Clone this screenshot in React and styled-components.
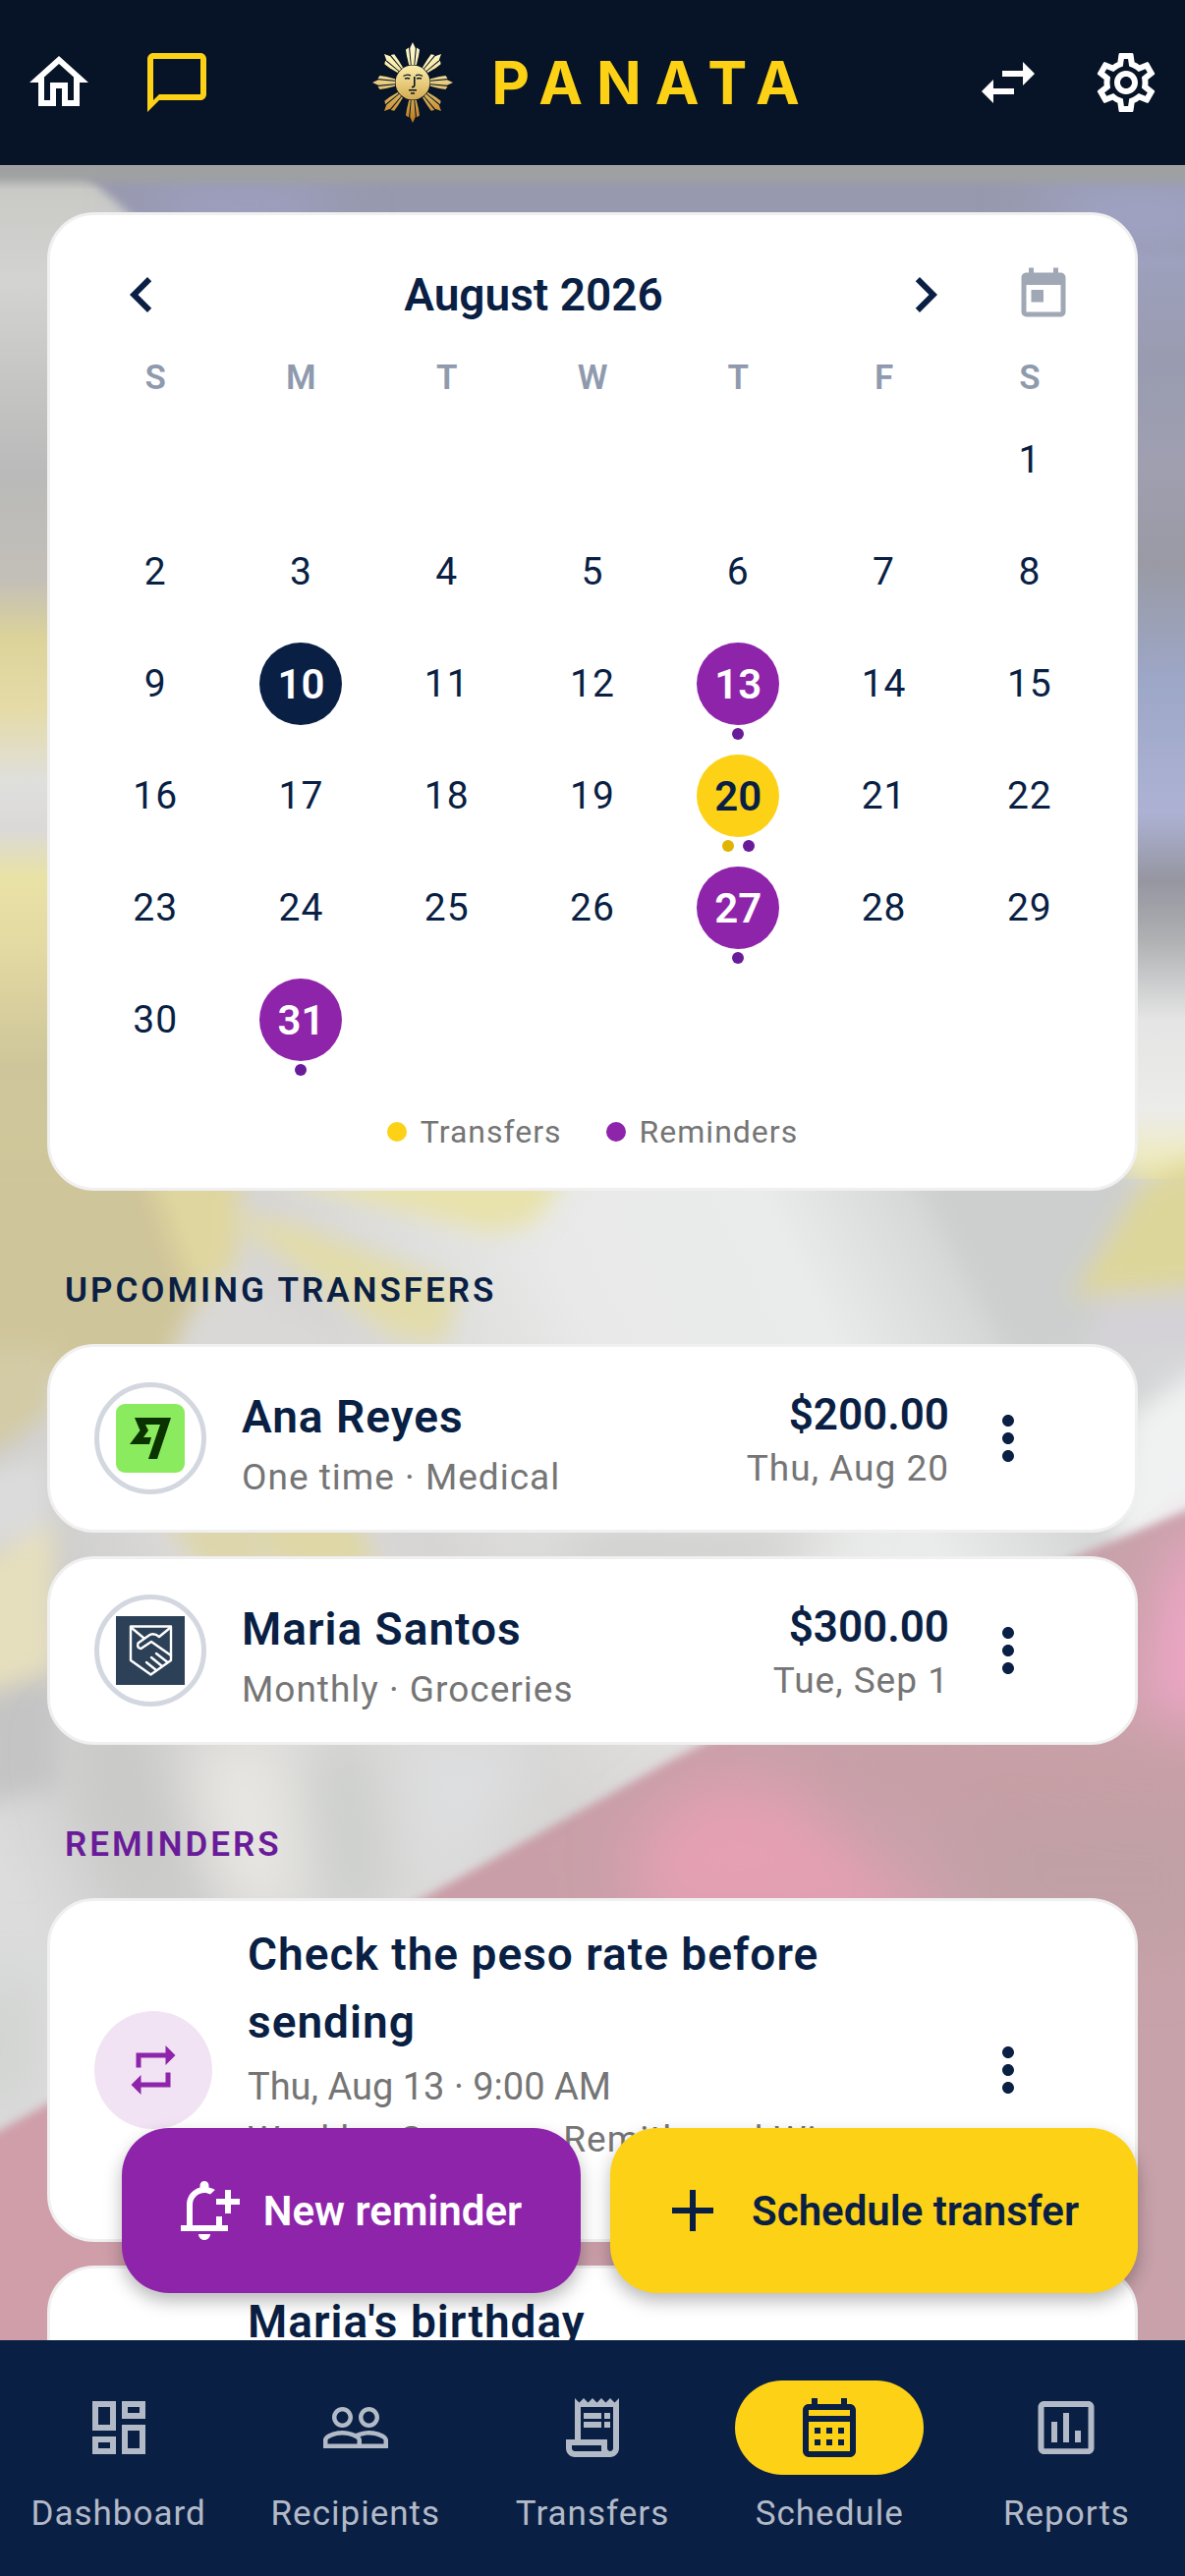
import React from "react";
import styled, { createGlobalStyle } from "styled-components";
import {
  MdAdd,
  MdChatBubbleOutline,
  MdChevronLeft,
  MdChevronRight,
  MdInsertChartOutlined,
  MdMoreVert,
  MdOutlineCalendarMonth,
  MdOutlineDashboard,
  MdOutlineHome,
  MdOutlineReceiptLong,
  MdOutlineSettings,
  MdPeopleOutline,
  MdRepeat,
  MdSwapHoriz,
  MdToday,
} from "react-icons/md";

const navy = "#0a1f44";
const yellow = "#fcd116";
const purple = "#8e24aa";
const deepPurple = "#6a1b9a";
const grey = "#757575";

const GlobalStyle = createGlobalStyle`
  * {
    box-sizing: border-box;
  }

  body {
    margin: 0;
    font-family: Roboto, "Liberation Sans", sans-serif;
    color: ${navy};
  }

  button {
    padding: 0;
    border: none;
    background: none;
    font: inherit;
    color: inherit;
    cursor: pointer;
  }

  svg {
    display: block;
    flex-shrink: 0;
  }
`;

const Page = styled.div`
  display: flex;
  flex-direction: column;
  height: 100vh;
`;

const Header = styled.header`
  display: flex;
  align-items: center;
  height: 168px;
  background-color: #071427;
  flex-shrink: 0;
`;

const IconButton = styled.button`
  display: flex;
  align-items: center;
  justify-content: center;
  width: 120px;
  height: 96px;
  font-size: ${(props) => props.$size || 72}px;
  color: ${(props) => props.$color || navy};
  flex-shrink: 0;
`;

const Brand = styled.h1`
  display: flex;
  flex: 1;
  align-items: center;
  justify-content: center;
  gap: 38px;
  margin: 0;
  font-family: Inter, "Open Sans", sans-serif;
  font-size: 60px;
  font-weight: 700;
  letter-spacing: 14px;
  color: ${yellow};
`;

const Stage = styled.div`
  position: relative;
  flex: 1;
  min-height: 0;
  overflow: hidden;
`;

const Backdrop = styled.svg`
  position: absolute;
  inset: 0;
  width: 100%;
  height: 100%;
`;

const Scroller = styled.main`
  position: relative;
  height: 100%;
  padding: 48px 48px 288px;
  overflow-y: auto;
  scrollbar-width: none;
`;

const Card = styled.section`
  background-color: #fff;
  border: 3px solid #f0f0f0;
  border-radius: 48px;
`;

const CalendarCard = styled(Card)`
  padding: 33px;
`;

const MonthBar = styled.div`
  display: flex;
  align-items: center;
`;

const MonthName = styled.h2`
  flex: 1;
  margin: 0;
  text-align: center;
  font-size: 46px;
  font-weight: 600;
`;

const Weekdays = styled.div`
  display: grid;
  grid-template-columns: repeat(7, 1fr);
  height: 72px;
  align-items: center;
  justify-items: center;
  font-size: 35px;
  font-weight: 600;
  color: #8f9aae;
`;

const Days = styled.div`
  display: grid;
  grid-template-columns: repeat(7, 1fr);
  grid-auto-rows: 114px;
  justify-items: center;
`;

const Day = styled.button`
  display: flex;
  flex-direction: column;
  align-items: center;
  gap: 3px;
  padding-top: 6px;
  grid-column-start: ${(props) => props.$column || "auto"};
`;

const DayNumber = styled.span`
  display: flex;
  align-items: center;
  justify-content: center;
  width: 84px;
  height: 84px;
  border-radius: 50%;
  font-size: ${(props) => (props.$fill ? 42 : 39)}px;
  font-weight: ${(props) => (props.$fill ? 600 : 400)};
  letter-spacing: ${(props) => (props.$fill ? 0 : 1)}px;
  background-color: ${(props) => props.$fill || "transparent"};
  color: ${(props) => props.$text || navy};
`;

const DayDots = styled.span`
  display: flex;
  gap: 9px;
`;

const Dot = styled.span`
  width: ${(props) => props.$size}px;
  height: ${(props) => props.$size}px;
  border-radius: 50%;
  background-color: ${(props) => props.$color};
`;

const Legend = styled.div`
  display: flex;
  justify-content: center;
  gap: 45px;
  height: 48px;
  margin-top: 24px;
`;

const LegendItem = styled.span`
  display: flex;
  align-items: center;
  gap: 14px;
  font-size: 32px;
  letter-spacing: 1px;
  color: ${grey};
`;

const SectionTitle = styled.h2`
  margin: 0;
  padding: 72px 18px 24px;
  font-size: 35px;
  line-height: 60px;
  font-weight: 600;
  letter-spacing: 3px;
  color: ${(props) => props.$color || navy};
`;

const List = styled.div`
  display: flex;
  flex-direction: column;
  gap: 24px;
`;

const ItemCard = styled(Card)`
  display: flex;
  align-items: center;
  min-height: 192px;
  padding: 20px 69px 20px 45px;
`;

const Avatar = styled.div`
  display: flex;
  align-items: center;
  justify-content: center;
  width: 114px;
  height: 114px;
  margin-right: 36px;
  border: 5px solid #d3d7df;
  border-radius: 50%;
  flex-shrink: 0;
`;

const ReminderBadge = styled.div`
  display: flex;
  align-items: center;
  justify-content: center;
  width: 120px;
  height: 120px;
  margin-right: 36px;
  border-radius: 50%;
  background-color: #f1e3f4;
  color: ${purple};
  font-size: 60px;
  flex-shrink: 0;
`;

const ItemText = styled.div`
  flex: 1;
  min-width: 0;
  padding-top: ${(props) => props.$top || 0}px;
`;

const ItemTitle = styled.h3`
  margin: 0;
  font-size: 46px;
  line-height: 69px;
  font-weight: 600;
  letter-spacing: 1px;
`;

const ItemDetail = styled.p`
  margin: 0;
  font-size: 37px;
  line-height: 54px;
  letter-spacing: 1px;
  color: ${grey};
`;

const ReminderTime = styled(ItemDetail)`
  padding-top: 4px;
  font-size: 38px;
  letter-spacing: 0;
`;

const AmountColumn = styled.div`
  padding-top: 2px;
  text-align: right;
`;

const Amount = styled.p`
  margin: 0;
  font-size: 44px;
  line-height: 60px;
  font-weight: 600;
`;

const AmountDate = styled.p`
  margin: 0;
  font-size: 37px;
  line-height: 50px;
  letter-spacing: 1px;
  color: ${grey};
`;

const Actions = styled.div`
  position: absolute;
  right: 48px;
  bottom: 48px;
  display: flex;
  gap: 30px;
`;

const ActionButton = styled.button`
  display: flex;
  align-items: center;
  gap: 24px;
  height: 168px;
  padding: 0 60px 0 48px;
  border-radius: 48px;
  background-color: ${(props) => props.$fill};
  color: ${(props) => props.$text};
  font-size: 42px;
  font-weight: 600;
  box-shadow: 0 8px 18px rgba(0, 0, 0, 0.28);

  svg {
    width: 72px;
    height: 72px;
  }
`;

const NavBar = styled.nav`
  display: flex;
  height: 240px;
  padding-top: 41px;
  background-color: ${navy};
  flex-shrink: 0;
`;

const NavLink = styled.a`
  display: flex;
  flex: 1;
  flex-direction: column;
  align-items: center;
  gap: 16px;
  font-size: 35px;
  line-height: 48px;
  letter-spacing: 1px;
  text-decoration: none;
  color: #b3bac7;
`;

const NavPill = styled.span`
  display: flex;
  align-items: center;
  justify-content: center;
  width: 192px;
  height: 96px;
  border-radius: 48px;
  font-size: 72px;
  background-color: ${(props) => (props.$active ? yellow : "transparent")};
  color: ${(props) => (props.$active ? navy : "inherit")};
`;

const rayAngles = [0, 45, 90, 135, 180, 225, 270, 315];

function SunLogo() {
  return (
    <svg width="84" height="84" viewBox="-42 -42 84 84" aria-hidden="true">
      <defs>
        <linearGradient id="gold" x1="0" y1="0" x2="0" y2="1">
          <stop offset="0" stopColor="#fffbd8" />
          <stop offset="0.3" stopColor="#faedaa" />
          <stop offset="0.6" stopColor="#e0bd68" />
          <stop offset="1" stopColor="#b97416" />
        </linearGradient>
        <mask id="sun">
          {rayAngles.map((angle) => (
            <g key={angle} transform={`rotate(${angle})`} fill="#fff">
              <path d="M-1.300-18L-2.800-35 0-41 2.800-35 1.300-18z" />
              <path d="M2.200-18L4-35.500 7-33.500 6-27 3.800-18z" />
              <path d="M-2.200-18L-4-35.500-7-33.500-6-27-3.800-18z" />
            </g>
          ))}
          <circle r="17.500" fill="#fff" />
          <g fill="none" stroke="#000" strokeWidth="1.400">
            <path d="M-9.500-6.500q4-2.500 7.500-.5M3-7q3.500-2 7 .5" />
            <path d="M-8-3.800q2.500-1.500 5 0M4-3.800q2.500-1.500 5 0" />
            <path d="M1.800-6v9q-.5 2-2.800 1.500" strokeWidth="1.600" />
            <path d="M-4 7.800h8M-2 11h4" />
          </g>
        </mask>
      </defs>
      <rect x="-42" y="-42" width="84" height="84" fill="url(#gold)" mask="url(#sun)" />
    </svg>
  );
}

function WiseLogo() {
  return (
    <svg width="70" height="70" viewBox="0 0 70 70" aria-label="Wise">
      <rect width="70" height="70" rx="9" fill="#8aeb5e" />
      <path
        fill="#0b3300"
        d="M19 14h37L42 56h-9l12-35H30l3 6-5 7h8l-2 7H14l10.500-14z"
      />
    </svg>
  );
}

function HandshakeLogo() {
  return (
    <svg width="70" height="70" viewBox="0 0 70 70" aria-label="Remitly">
      <rect width="70" height="70" fill="#2c4058" />
      <g
        fill="none"
        stroke="#fff"
        strokeWidth="2.400"
        strokeLinecap="round"
        strokeLinejoin="round"
      >
        <path d="M15 10.500h41V45L35.500 59.500 15 45z" />
        <path d="M16 12l12 10M55 12L44 21q-6-5-11-1L22.500 27.500q-1.500 5 3 5.500L36 26l20 14" />
        <path d="M41 38l11 8.500M36 42l11 9M31 47l10 8" />
      </g>
    </svg>
  );
}

function BellPlusIcon() {
  return (
    <svg viewBox="0 0 24 24" fill="currentColor" aria-hidden="true">
      <path d="M18 17v-3h-2v3H8v-7c0-2.210 1.790-4 4-4 .7 0 1.400.2 2 .5L15.600 5c-.6-.4-1.300-.6-2.100-.8v-.7a1.500 1.500 0 0 0-3 0v.7C7.900 4.900 6 7.200 6 10v7H4v2h16v-2z" />
      <path d="M14 20h-4c0 1.100.9 2 2 2s2-.9 2-2zM24 8h-3V5h-2v3h-3v2h3v3h2v-3h3z" />
    </svg>
  );
}

// Faded flag behind the cards: blue on top, white in the middle, red below
function FlagBackdrop() {
  return (
    <Backdrop viewBox="0 168 1206 2214" preserveAspectRatio="none" aria-hidden="true">
      <defs>
        <filter id="soft" x="-30%" y="-30%" width="160%" height="160%">
          <feGaussianBlur stdDeviation="12" />
        </filter>
        <filter id="wide" x="-40%" y="-40%" width="180%" height="180%">
          <feGaussianBlur stdDeviation="30" />
        </filter>
        <filter id="edge" x="-10%" y="-10%" width="120%" height="120%">
          <feGaussianBlur stdDeviation="5" />
        </filter>
        <linearGradient id="leftEdge" gradientUnits="userSpaceOnUse" x1="0" y1="190" x2="0" y2="1400">
          <stop offset="0" stopColor="#c9cac6" />
          <stop offset="0.08" stopColor="#d3d3d1" />
          <stop offset="0.24" stopColor="#b9bab9" />
          <stop offset="0.33" stopColor="#c3bfb8" />
          <stop offset="0.38" stopColor="#dcd39a" />
          <stop offset="0.44" stopColor="#e5dba8" />
          <stop offset="0.5" stopColor="#dfdfdc" />
          <stop offset="0.54" stopColor="#dad9d8" />
          <stop offset="0.58" stopColor="#e9e2a6" />
          <stop offset="0.64" stopColor="#e3d9a2" />
          <stop offset="0.74" stopColor="#cec59a" />
          <stop offset="1" stopColor="#d2c99c" />
        </linearGradient>
        <linearGradient id="rightEdge" gradientUnits="userSpaceOnUse" x1="0" y1="190" x2="0" y2="1200">
          <stop offset="0" stopColor="#a0a2c4" />
          <stop offset="0.18" stopColor="#999cb0" />
          <stop offset="0.28" stopColor="#9f9fb0" />
          <stop offset="0.38" stopColor="#999aa4" />
          <stop offset="0.5" stopColor="#9da7c8" />
          <stop offset="0.63" stopColor="#adb2d4" />
          <stop offset="0.7" stopColor="#9596a0" />
          <stop offset="0.76" stopColor="#b0b1b3" />
          <stop offset="0.84" stopColor="#e4e5e4" />
          <stop offset="0.93" stopColor="#ececea" />
          <stop offset="1" stopColor="#efeab0" />
        </linearGradient>
        <linearGradient id="folds" gradientUnits="userSpaceOnUse" x1="0" y1="1900" x2="1206" y2="1300">
          <stop offset="0" stopColor="#dcdcdd" />
          <stop offset="0.12" stopColor="#cbcbca" />
          <stop offset="0.25" stopColor="#dddcdb" />
          <stop offset="0.4" stopColor="#d6d5d4" />
          <stop offset="0.58" stopColor="#e8e9e8" />
          <stop offset="0.74" stopColor="#eaeceb" />
          <stop offset="0.88" stopColor="#cfd1d0" />
          <stop offset="1" stopColor="#dadbdd" />
        </linearGradient>
        <linearGradient id="redField" gradientUnits="userSpaceOnUse" x1="0" y1="2380" x2="1206" y2="2000">
          <stop offset="0" stopColor="#d09ea9" />
          <stop offset="0.5" stopColor="#c99ea8" />
          <stop offset="1" stopColor="#c8a2aa" />
        </linearGradient>
      </defs>

      <rect y="168" width="1206" height="2214" fill="url(#folds)" />
      <rect y="168" width="603" height="1032" fill="url(#leftEdge)" />
      <rect x="603" y="168" width="603" height="1032" fill="url(#rightEdge)" />
      <path d="M75 168H1246V260H180z" fill="#9799ae" filter="url(#edge)" />
      <g filter="url(#wide)">
        <path d="M140 190H330V240H180z" fill="#9fa1c4" />
        <path d="M1050 190H1240V250H1100z" fill="#a1a4c8" />
      </g>

      <g filter="url(#soft)">
        <path d="M-40 1180H230L215 1290 165 1400H-40z" fill="#cfc59a" />
        <path d="M150 1190H245L240 1290 200 1330z" fill="#dfd69f" />
        <path d="M250 1190H580L545 1245 500 1255 380 1225z" fill="#e8e2ac" />
        <path d="M225 1235L300 1245 470 1310 450 1370 400 1360z" fill="#e2dcab" />
        <path d="M215 1300L270 1330 420 1390 200 1390z" fill="#d9d8d6" />
        <path d="M930 1190H1160L1110 1380H1030z" fill="#cdcfce" />
        <path d="M1165 1200L1246 1170V1310L1090 1320z" fill="#ddd69b" />
        <path d="M1120 1320L1246 1310V1380H1100z" fill="#d4d2d6" />
        <path d="M-40 1370H60L50 1440-40 1500z" fill="#d3cba5" />
        <path d="M-40 1500L50 1480V1560L-40 1580z" fill="#dbdbdb" />
        <path d="M-40 1600L55 1550V1700L-40 1740z" fill="#e6dfbd" />
        <path d="M165 1540H250L280 1600H205z" fill="#ddd6ab" />
        <path d="M250 1540H360L385 1600H290z" fill="#dfd7a4" />
        <path d="M1150 1440L1246 1380V1530L1130 1590z" fill="#f0f2f2" />
        <path d="M-40 1730L60 1700V1820L-40 1840z" fill="#c4c4c4" />
      </g>
      <g filter="url(#wide)">
        <path d="M600 1540H860L780 1620H540z" fill="#d0d1ce" />
        <path d="M70 1770H140L180 1950H120z" fill="#c9c9c8" />
        <path d="M190 1770H290L310 1950H230z" fill="#e8e7e3" />
        <path d="M310 1770H370L400 1950H340z" fill="#c9ccc9" />
        <path d="M410 1770H560L440 1920z" fill="#dedfe1" />
        <path d="M-40 2020L40 2000V2140L-40 2160z" fill="#d2d4d1" />
      </g>

      <path
        filter="url(#edge)"
        d="M1246 1522L1080 1590 690 1788 430 1932 0 2168-40 2190V2440H1246z"
        fill="url(#redField)"
      />
      <g filter="url(#wide)">
        <path d="M1190 1590L1260 1540V1760L1160 1740z" fill="#f0a5c6" />
        <path d="M640 1880L720 1810 800 1820 960 1960H660z" fill="#e5a0b3" />
        <path d="M760 1790L860 1770H1246V1830L980 1840z" fill="#c79fa5" />
        <path d="M960 1840H1246V1990H1020z" fill="#c1a0a5" />
      </g>
      <rect x="-40" y="128" width="1286" height="58" fill="#9fa0a2" filter="url(#edge)" />
    </Backdrop>
  );
}

const markedDays = {
  10: { fill: navy, text: "#fff", dots: [] },
  13: { fill: purple, text: "#fff", dots: [deepPurple] },
  20: { fill: yellow, text: navy, dots: ["#e0b400", deepPurple] },
  27: { fill: purple, text: "#fff", dots: [deepPurple] },
  31: { fill: purple, text: "#fff", dots: [deepPurple] },
};

const days = Array.from({ length: 31 }, (_, index) => index + 1);

function Calendar() {
  return (
    <CalendarCard>
      <MonthBar>
        <IconButton aria-label="Previous month">
          <MdChevronLeft />
        </IconButton>
        <MonthName>August 2026</MonthName>
        <IconButton aria-label="Next month">
          <MdChevronRight />
        </IconButton>
        <IconButton aria-label="Today" $size={60} $color="#a0a8b6">
          <MdToday />
        </IconButton>
      </MonthBar>
      <Weekdays>
        {["S", "M", "T", "W", "T", "F", "S"].map((name, index) => (
          <span key={index}>{name}</span>
        ))}
      </Weekdays>
      <Days>
        {days.map((day) => {
          const mark = markedDays[day];
          return (
            <Day key={day} $column={day === 1 ? 7 : undefined}>
              <DayNumber $fill={mark?.fill} $text={mark?.text}>
                {day}
              </DayNumber>
              <DayDots>
                {mark?.dots.map((color) => (
                  <Dot key={color} $size={12} $color={color} />
                ))}
              </DayDots>
            </Day>
          );
        })}
      </Days>
      <Legend>
        <LegendItem>
          <Dot $size={20} $color={yellow} />
          Transfers
        </LegendItem>
        <LegendItem>
          <Dot $size={20} $color={purple} />
          Reminders
        </LegendItem>
      </Legend>
    </CalendarCard>
  );
}

function TransferItem({ logo, name, detail, amount, date }) {
  return (
    <ItemCard as="article">
      <Avatar>{logo}</Avatar>
      <ItemText $top={10}>
        <ItemTitle>{name}</ItemTitle>
        <ItemDetail>{detail}</ItemDetail>
      </ItemText>
      <AmountColumn>
        <Amount>{amount}</Amount>
        <AmountDate>{date}</AmountDate>
      </AmountColumn>
      <IconButton aria-label={`Options for ${name}`}>
        <MdMoreVert />
      </IconButton>
    </ItemCard>
  );
}

function ReminderItem({ title, time, note }) {
  return (
    <ItemCard as="article">
      <ReminderBadge>
        <MdRepeat />
      </ReminderBadge>
      <ItemText>
        <ItemTitle>{title}</ItemTitle>
        <ReminderTime>{time}</ReminderTime>
        <ItemDetail>{note}</ItemDetail>
      </ItemText>
      <IconButton aria-label={`Options for ${title}`}>
        <MdMoreVert />
      </IconButton>
    </ItemCard>
  );
}

const navItems = [
  { label: "Dashboard", icon: <MdOutlineDashboard /> },
  { label: "Recipients", icon: <MdPeopleOutline /> },
  { label: "Transfers", icon: <MdOutlineReceiptLong /> },
  { label: "Schedule", icon: <MdOutlineCalendarMonth />, active: true },
  { label: "Reports", icon: <MdInsertChartOutlined /> },
];

function App() {
  return (
    <Page>
      <GlobalStyle />
      <Header>
        <IconButton aria-label="Home" $color="#fff">
          <MdOutlineHome />
        </IconButton>
        <IconButton aria-label="Messages" $color={yellow}>
          <MdChatBubbleOutline />
        </IconButton>
        <Brand>
          <SunLogo />
          PANATA
        </Brand>
        <IconButton aria-label="Convert" $color="#fff">
          <MdSwapHoriz />
        </IconButton>
        <IconButton aria-label="Settings" $color="#fff">
          <MdOutlineSettings />
        </IconButton>
      </Header>

      <Stage>
        <FlagBackdrop />
        <Scroller>
          <Calendar />

          <SectionTitle>UPCOMING TRANSFERS</SectionTitle>
          <List>
            <TransferItem
              logo={<WiseLogo />}
              name="Ana Reyes"
              detail="One time · Medical"
              amount="$200.00"
              date="Thu, Aug 20"
            />
            <TransferItem
              logo={<HandshakeLogo />}
              name="Maria Santos"
              detail="Monthly · Groceries"
              amount="$300.00"
              date="Tue, Sep 1"
            />
          </List>

          <SectionTitle $color={deepPurple}>REMINDERS</SectionTitle>
          <List>
            <ReminderItem
              title="Check the peso rate before sending"
              time="Thu, Aug 13 · 9:00 AM"
              note="Weekly · Compare Remitly and Wise exchange rates"
            />
            <ReminderItem
              title="Maria's birthday"
              time="Thu, Aug 20 · 9:00 AM"
              note="Yearly · Send a little extra for the family birthday dinner"
            />
          </List>
        </Scroller>
        <Actions>
          <ActionButton $fill={purple} $text="#fff">
            <BellPlusIcon />
            New reminder
          </ActionButton>
          <ActionButton $fill={yellow} $text={navy}>
            <MdAdd />
            Schedule transfer
          </ActionButton>
        </Actions>
      </Stage>

      <NavBar>
        {navItems.map((item) => (
          <NavLink key={item.label} href={`#${item.label.toLowerCase()}`}>
            <NavPill $active={item.active}>{item.icon}</NavPill>
            {item.label}
          </NavLink>
        ))}
      </NavBar>
    </Page>
  );
}

export default App;
